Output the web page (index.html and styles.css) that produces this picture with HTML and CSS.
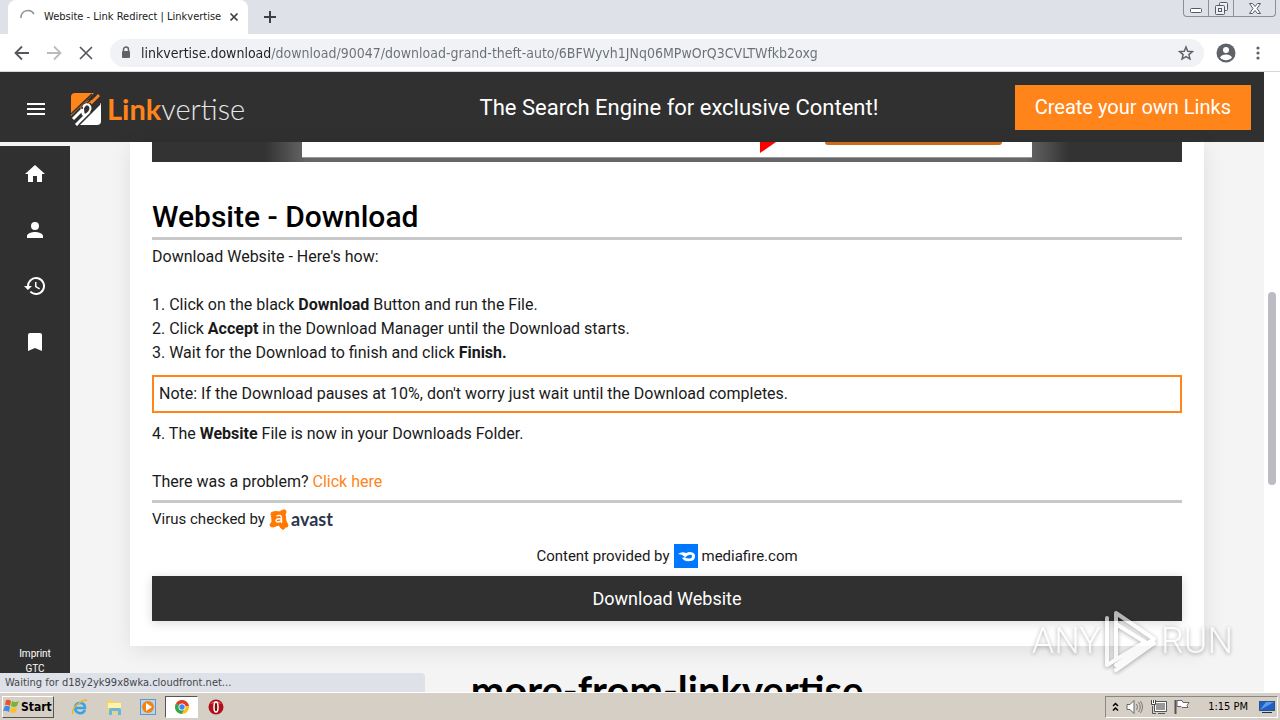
FILE: index.html
```html
<!DOCTYPE html>
<html lang="en">
<head>
    <meta charset="UTF-8">
    <meta name="viewport" content="width=device-width, initial-scale=1.0">
    <title>Website - Link Redirect | Linkvertise</title>
    <link rel="stylesheet" href="styles.css">
</head>
<body>
    <!-- Browser tabs -->
    <div class="tab-strip">
        <div class="tab">
            <svg class="spinner" width="16" height="16" viewBox="0 0 16 16"><path d="M1 9a7 7 0 0 1 13-4" fill="none" stroke="#8d9094" stroke-width="1.500"/></svg>
            <span class="tab-title">Website - Link Redirect | Linkvertise</span>
            <button class="icon-button" aria-label="Close tab">
                <svg width="10" height="10" viewBox="0 0 10 10"><path d="M1.500 1.500l7 7M8.500 1.500l-7 7" stroke="#3c4043" stroke-width="1.700"/></svg>
            </button>
        </div>
        <button class="icon-button new-tab" aria-label="New tab">
            <svg width="12" height="12" viewBox="0 0 12 12"><path d="M6 0v12M0 6h12" stroke="#3c4043" stroke-width="2"/></svg>
        </button>
        <div class="window-buttons">
            <button aria-label="Minimize"><svg width="12" height="5" viewBox="0 0 12 5"><rect x=".5" y=".5" width="11" height="4" rx="1" fill="#fff" stroke="#555a66"/></svg></button>
            <button aria-label="Restore"><svg width="13" height="13" viewBox="0 0 13 13" fill="#eef0f4" stroke="#555a66"><rect x="4.500" y=".5" width="8" height="8" rx="1"/><rect x=".5" y="3.500" width="9" height="9" rx="1"/><rect x="3.500" y="6.500" width="3" height="3"/></svg></button>
            <button class="window-close" aria-label="Close"><svg width="12" height="11" viewBox="0 0 12 11"><path d="M.5.5h3L6 3.500 8.500.5h3L8 5.500l3.500 5h-3L6 7.500l-2.500 3h-3L4 5.500z" fill="#fff" stroke="#555a66"/></svg></button>
        </div>
    </div>

    <!-- Address bar -->
    <div class="toolbar">
        <button class="icon-button" aria-label="Back"><svg width="16" height="16" viewBox="0 0 16 16"><path d="M15 8H2M8 1.500L1.500 8 8 14.500" fill="none" stroke="#55585c" stroke-width="1.800"/></svg></button>
        <button class="icon-button" aria-label="Forward"><svg width="16" height="16" viewBox="0 0 16 16"><path d="M1 8h13M8 1.500L14.500 8 8 14.500" fill="none" stroke="#b9bbbe" stroke-width="1.800"/></svg></button>
        <button class="icon-button" aria-label="Stop"><svg width="16" height="16" viewBox="0 0 16 16"><path d="M2 2l12 12M14 2L2 14" stroke="#55585c" stroke-width="1.700"/></svg></button>
        <div class="address">
            <svg width="10" height="13" viewBox="0 0 10 13"><path d="M2.500 5V3.500a2.500 2.500 0 0 1 5 0V5" fill="none" stroke="#5f6368" stroke-width="1.500"/><rect x="1" y="5" width="8" height="7" rx="1" fill="#5f6368"/></svg>
            <input type="text" aria-label="Address" value="linkvertise.download/download/90047/download-grand-theft-auto/6BFWyvh1JNq06MPwOrQ3CVLTWfkb2oxg">
            <button class="icon-button" aria-label="Bookmark this page"><svg width="16" height="16" viewBox="0 0 24 24"><path d="M12 3l2.600 6.300 6.900.6-5.200 4.500 1.600 6.700-5.900-3.600-5.900 3.600 1.600-6.700-5.200-4.500 6.900-.6z" fill="none" stroke="#5f6368" stroke-width="2.200"/></svg></button>
        </div>
        <div class="toolbar-end">
            <button class="icon-button" aria-label="Profile"><svg width="20" height="20" viewBox="0 0 20 20"><circle cx="10" cy="10" r="9.500" fill="#5f6368"/><circle cx="10" cy="7" r="3" fill="#fff"/><path d="M4 14.500c1.500-4 10.500-4 12 0-3 3.700-9 3.700-12 0z" fill="#fff"/></svg></button>
            <button class="icon-button" aria-label="Menu"><svg width="4" height="14" viewBox="0 0 4 14" fill="#5f6368"><circle cx="2" cy="2" r="1.600"/><circle cx="2" cy="7" r="1.600"/><circle cx="2" cy="12" r="1.600"/></svg></button>
        </div>
    </div>

    <!-- Web page -->
    <div class="viewport">
        <div class="site">
            <header class="site-header">
                <button class="icon-button menu-button" aria-label="Open menu"><svg width="18" height="12" viewBox="0 0 18 12"><path d="M0 1h18M0 6h18M0 11h18" stroke="#fff" stroke-width="2"/></svg></button>
                <a class="logo" href="#">
                    <svg width="32" height="34" viewBox="0 0 32 34">
                        <path d="M1 22V5q0-4 4-4h19L1 24z" fill="#ff8419"/>
                        <path d="M31 11v18q0 4-4 4H9z" fill="#fff"/>
                        <path d="M11 17l6-6q4-3 5-1l7-7" fill="none" stroke="#ff8419" stroke-width="3"/>
                        <path d="M3 27l10-10q-1 7 3 6L6 33" fill="none" stroke="#fff" stroke-width="3"/>
                        <path d="M1 22L22 2M12 17q0-5 5-6l9-8" fill="none" stroke="#303030" stroke-width="1.500"/>
                        <path d="M9 33l21-21" stroke="#303030" stroke-width="1.500"/>
                        <path d="M13 15q2-4 6-2 3 3 0 7l-6 6" fill="none" stroke="#fff" stroke-width="2"/>
                        <circle cx="16" cy="17" r="2" fill="#303030"/>
                    </svg>
                    <span class="logo-text"><b>Link</b>vertise</span>
                </a>
                <p class="slogan">The Search Engine for exclusive Content!</p>
                <button class="create-button">Create your own Links</button>
            </header>

            <div class="site-body">
                <nav class="sidebar">
                    <a href="#" aria-label="Home"><svg width="24" height="24" viewBox="0 0 24 24"><path d="M10 20v-6h4v6h5v-8h3L12 3 2 12h3v8z"/></svg></a>
                    <a href="#" aria-label="Account"><svg width="24" height="24" viewBox="0 0 24 24"><path d="M12 12a4 4 0 1 0 0-8 4 4 0 0 0 0 8zm0 2c-2.670 0-8 1.340-8 4v2h16v-2c0-2.660-5.330-4-8-4z"/></svg></a>
                    <a href="#" aria-label="History"><svg width="24" height="24" viewBox="0 0 24 24"><path d="M13 3a9 9 0 0 0-9 9H1l3.890 3.890.07.14L9 12H6a7 7 0 1 1 2.060 4.940l-1.420 1.420A9 9 0 1 0 13 3zm-1 5v5l4.280 2.540.72-1.210-3.500-2.080V8z"/></svg></a>
                    <a href="#" aria-label="Bookmarks"><svg width="24" height="24" viewBox="0 0 24 24"><path d="M17 3H7a2 2 0 0 0-2 2v16l7-3 7 3V5a2 2 0 0 0-2-2z"/></svg></a>
                    <div class="legal">
                        <a href="#">Imprint</a>
                        <a href="#">GTC</a>
                    </div>
                </nav>

                <main class="content">
                    <article class="card">
                        <div class="banner">
                            <div class="banner-inner">
                                <svg width="25" height="11" viewBox="0 0 25 11"><path d="M0 0h16L0 11z" fill="#f00"/></svg>
                                <span class="banner-button"></span>
                            </div>
                        </div>
                        <h1>Website - Download</h1>
                        <div class="steps">
                            <p>Download Website - Here's how:</p>
                            <br>
                            <p>1. Click on the black <b>Download</b> Button and run the File.</p>
                            <p>2. Click <b>Accept</b> in the Download Manager until the Download starts.</p>
                            <p>3. Wait for the Download to finish and click <b>Finish.</b></p>
                            <p class="note">Note: If the Download pauses at 10%, don't worry just wait until the Download completes.</p>
                            <p>4. The <b>Website</b> File is now in your Downloads Folder.</p>
                            <br>
                            <p>There was a problem? <a href="#">Click here</a></p>
                        </div>
                        <p class="checked">Virus checked by
                            <svg width="21" height="21" viewBox="0 0 21 21"><path d="M4 3q3-1 6 0l4-2q3-1 3 2 0 1-1 2l1 7 2 4q0 3-3 2l-1 2q-2 1-3-1l-2-3-6 2q-3 0-3-2 0-1 2-3 0-5-1-8 0-2 2-2z" fill="#ff7800" stroke="#ff7800" stroke-linejoin="round"/><path d="M7.500 7q5-2 5 2v5M12 10q-5-1-5 2 1 2 5 0" fill="none" stroke="#fff" stroke-width="1.400"/></svg>
                            <span class="avast">avast</span>
                        </p>
                        <p class="provider">Content provided by
                            <svg width="24" height="24" viewBox="0 0 24 24"><path d="M0 0h24v24H0z" fill="#0077ff"/><path d="M4 10q4-3 8-1l3-1q6 0 6 4 0 5-5 5-5 1-8-3l3-1q-3-3-7-3z" fill="#fff"/><path d="M11 14q2-3 4-3 3-1 3 1 0 3-3 2.500-2-.5-4-.5z" fill="#0077ff"/></svg>
                            mediafire.com
                        </p>
                        <button class="download-button">Download Website</button>
                    </article>
                    <h2>more-from-linkvertise</h2>
                </main>
            </div>
        </div>
        <div class="scrollbar"><div class="thumb"></div></div>
        <div class="status">Waiting for d18y2yk99x8wka.cloudfront.net...</div>
        <div class="watermark">
            <span>ANY</span>
            <svg width="58" height="66" viewBox="0 0 58 66"><path d="M5 57V10M14 50V5l38 26L14 57M5 57l38-23L14 16M14 62l38-27" fill="none" stroke="#fff" stroke-width="4" stroke-linecap="round" stroke-linejoin="round"/></svg>
            <span>RUN</span>
        </div>
    </div>

    <!-- Windows taskbar -->
    <footer class="taskbar">
        <button class="start">
            <svg width="17" height="16" viewBox="0 0 17 16"><path d="M3 1q3-1 5 1L7 7Q4 5 2 6z" fill="#e6552b"/><path d="M9 2q3 2 7 0l-2 5q-3 2-6 0z" fill="#76b82a"/><path d="M2 7q3-1 5 1l-1 5q-3-2-6-1z" fill="#3c8de0"/><path d="M8 8q3 2 6 0l-1 5q-3 2-6 0z" fill="#fbc02d"/></svg>
            Start
        </button>
        <button class="task" aria-label="Internet Explorer"><svg width="18" height="18" viewBox="0 0 18 18"><path d="M14 12q-2 4-6 3-4-1-4-6 1-4 5-4 5 0 5 5H5" fill="none" stroke="#38a3e2" stroke-width="2.500"/><path d="M2 16Q0 12 7 6q8-6 9-3" fill="none" stroke="#e7b731" stroke-width="1.500"/></svg></button>
        <button class="task" aria-label="Explorer"><svg width="18" height="18" viewBox="0 0 18 18"><path d="M2 2h5l1 2h8v11H2z" fill="#f0d56c"/><path d="M3 5h13v5H3z" fill="#fff3ab"/><path d="M4 17v-5q0-2 2-2h8q2 0 2 2v5h-3v-4H7v4z" fill="#65b9dd"/></svg></button>
        <button class="task" aria-label="Media Player"><svg width="18" height="18" viewBox="0 0 18 18"><rect x="1.500" y="1.500" width="15" height="15" fill="#b9d4ee" stroke="#5d97cc"/><circle cx="9" cy="9" r="6" fill="#f48412"/><path d="M7 5l6 4-6 4z" fill="#fff"/></svg></button>
        <button class="task active" aria-label="Chrome"><svg width="16" height="16" viewBox="0 0 16 16"><circle cx="8" cy="8" r="7" fill="#fbc116"/><path d="M8 8L2 4.500a7 7 0 0 1 12 0z" fill="#e33b2e"/><path d="M8 8L2 4.500A7 7 0 0 0 7.500 15L10 11z" fill="#2da94f"/><path d="M8 4.500h6a7 7 0 0 1 .9 2.500H8z" fill="#e33b2e"/><circle cx="8" cy="8" r="3.500" fill="#fff"/><circle cx="8" cy="8" r="2.700" fill="#4285f4"/></svg></button>
        <button class="task" aria-label="Opera"><svg width="16" height="16" viewBox="0 0 16 16"><circle cx="8" cy="8" r="7.500" fill="#b0101a"/><path d="M2 5q6-6 12 0-6-2-12 0z" fill="#e8646a"/><ellipse cx="8" cy="8" rx="2" ry="5" fill="#7c0a10" stroke="#fff" stroke-width="1.500"/></svg></button>
        <div class="tray">
            <svg width="7" height="10" viewBox="0 0 7 10"><path d="M1 4l2.500-2.500L6 4M1 8.500L3.500 6 6 8.500" fill="none" stroke="#000" stroke-width="1.500"/></svg>
            <svg width="17" height="16" viewBox="0 0 17 16"><path d="M1 5.500h3l4-4v13l-4-4H1z" fill="#fff" stroke="#666"/><path d="M10.500 5q2 3 0 6M12.500 3q3.500 5 0 10M14.500 2q4 6 0 12" fill="none" stroke="#777"/></svg>
            <svg width="17" height="16" viewBox="0 0 17 16"><rect x="5.500" y="3.500" width="10" height="8" fill="#999" stroke="#fff"/><path d="M4.500 2.500h12v10h-12zM8 14.500h7M2.500 7v7.500H6" fill="none" stroke="#555"/><path d="M1.500 1v4.500h4V1M3.500 1v3" fill="#fff" stroke="#444"/></svg>
            <svg width="17" height="16" viewBox="0 0 17 16"><path d="M1.500 1v14" stroke="#555" stroke-width="2"/><path d="M3 1.500h5l1 2h6l-2 3 1 2H8l-1-1H3z" fill="#fff" stroke="#666"/></svg>
            <time>1:15 PM</time>
            <svg width="16" height="14" viewBox="0 0 16 14"><rect x=".5" y="1.500" width="15" height="9" fill="#1d5fc4" stroke="#2e5384"/><path d="M1 10l6-8h8z" fill="#5d9bea"/><path d="M3 12.500h10" stroke="#17305a"/></svg>
        </div>
    </footer>
</body>
</html>
```
FILE: styles.css
```css
* {
    margin: 0;
    padding: 0;
    box-sizing: border-box;
}

body {
    font-family: Roboto, sans-serif;
    font-size: 16px;
    line-height: 24px;
    color: #1a1a1a;
    height: 100vh;
    overflow: hidden;
    display: flex;
    flex-direction: column;
}

button {
    font: inherit;
    color: inherit;
    background: none;
    border: none;
    cursor: pointer;
}

a {
    color: #ff8419;
    text-decoration: none;
}

svg {
    flex-shrink: 0;
}

.icon-button {
    display: flex;
    align-items: center;
    justify-content: center;
}

/* Browser tabs */
.tab-strip {
    height: 34px;
    flex-shrink: 0;
    display: flex;
    padding-left: 8px;
    background: #dee1e8;
}

.tab {
    width: 240px;
    display: flex;
    align-items: center;
    gap: 8px;
    padding: 0 11px 0 12px;
    background: #fff;
    border-radius: 8px 8px 0 0;
}

.tab-title {
    flex: 1;
    font-family: "DejaVu Sans Condensed", "DejaVu Sans", sans-serif;
    font-size: 11px;
    white-space: nowrap;
}

.new-tab {
    width: 44px;
}

.window-buttons {
    display: flex;
    height: 17px;
    margin-left: auto;
    margin-right: 4px;
    border: 1px solid #8b8f9b;
    border-top: none;
    border-radius: 0 0 4px 4px;
}

.window-buttons button {
    width: 25px;
    display: flex;
    align-items: center;
    justify-content: center;
    border-right: 1px solid #8b8f9b;
}

.window-buttons button:first-child {
    align-items: flex-end;
    padding-bottom: 3px;
}

.window-buttons .window-close {
    width: 41px;
    border-right: none;
}

/* Address bar */
.toolbar {
    height: 38px;
    flex-shrink: 0;
    display: flex;
    align-items: center;
    gap: 16px;
    padding: 0 20px 0 14px;
    background: #fff;
    border-bottom: 1px solid #d5d7db;
}

.address {
    flex: 1;
    height: 28px;
    display: flex;
    align-items: center;
    gap: 10px;
    padding: 0 10px 0 11px;
    background: #f0f2f5;
    border-radius: 14px;
}

/* Host name is darker than the path */
.address input {
    flex: 1;
    border: none;
    outline: none;
    font-family: "DejaVu Sans Condensed", "DejaVu Sans", sans-serif;
    font-size: 14px;
    color: transparent;
    background: linear-gradient(to right, #202124 129px, #6b6f74 129px);
    -webkit-background-clip: text;
    background-clip: text;
}

.toolbar-end {
    display: flex;
    align-items: center;
    gap: 20px;
    margin-left: -4px;
}

/* Web page */
.viewport {
    flex: 1;
    min-height: 0;
    display: flex;
    position: relative;
    overflow: hidden;
}

.site {
    flex: 1;
    display: flex;
    flex-direction: column;
    background: #f4f4f4;
}

.site-header {
    height: 70px;
    flex-shrink: 0;
    display: flex;
    align-items: center;
    padding: 0 13px 0 27px;
    background: #303030;
    color: #fff;
}

.menu-button {
    padding-top: 4px;
    margin-right: 25px;
}

.logo {
    display: flex;
    align-items: center;
    gap: 5px;
    padding-top: 3px;
}

.logo-text {
    font-family: Lato, sans-serif;
    font-size: 29px;
    font-weight: 300;
    color: #e6e6e6;
}

.logo-text b {
    font-weight: 700;
    color: #ff8419;
}

.slogan {
    flex: 1;
    padding: 2px 0 0 98px;
    font-size: 22px;
    text-align: center;
}

.create-button {
    height: 45px;
    padding: 0 20px;
    background: #ff8419;
    font-size: 20px;
}

.site-body {
    flex: 1;
    min-height: 0;
    display: flex;
}

.sidebar {
    width: 70px;
    margin-top: 4px;
    padding: 16px 0;
    display: flex;
    flex-direction: column;
    align-items: center;
    gap: 32px;
    background: #303030;
}

.sidebar > a {
    height: 24px;
    fill: #fff;
}

.legal {
    margin-top: auto;
    font-size: 10px;
    line-height: 15px;
    text-align: center;
}

.legal a {
    display: block;
    color: #fff;
}

.content {
    flex: 1;
    padding: 0 60px;
}

.card {
    padding: 0 22px 25px;
    background: #fff;
    box-shadow: 0 4px 20px rgba(0, 0, 0, 0.09);
}

.banner {
    height: 20px;
    padding: 0 150px;
    background: linear-gradient(to right, #333 11%, #666 15%, #666 85%, #333 89%);
}

.banner-inner {
    height: 16px;
    display: flex;
    justify-content: flex-end;
    gap: 40px;
    padding-right: 30px;
    background: #fff;
    border-bottom: 1px solid #999;
}

.banner-button {
    width: 177px;
    height: 3px;
    background: #cc6d1c;
    border-radius: 0 0 4px 4px;
}

h1 {
    margin-top: 37px;
    padding-bottom: 2px;
    font-size: 30px;
    line-height: 36px;
    font-weight: 500;
    color: #000;
    border-bottom: 3px solid #c8c8c8;
}

.steps {
    padding: 5px 0 6px;
    border-bottom: 3px solid #c8c8c8;
}

.note {
    margin: 10px 0 9px;
    padding: 5px;
    border: 2px solid #ff8419;
}

.checked,
.provider {
    display: flex;
    align-items: center;
    gap: 4px;
    font-size: 15px;
}

.checked {
    margin: 4px 0 13px;
}

.avast {
    font-family: Lato, sans-serif;
    font-size: 18px;
    font-weight: 700;
    color: #2d364c;
    margin-left: -3px;
}

.provider {
    justify-content: center;
    margin-bottom: 8px;
}

.download-button {
    display: block;
    width: 100%;
    height: 45px;
    background: #303030;
    color: #fff;
    font-size: 18px;
    box-shadow: 0 2px 10px rgba(0, 0, 0, 0.15);
}

h2 {
    margin-top: 20px;
    font-family: Lato, sans-serif;
    font-size: 40px;
    line-height: 48px;
    font-weight: 700;
    color: #000;
    text-align: center;
}

.scrollbar {
    width: 16px;
    padding: 220px 4px 0;
    background: #fff;
}

.thumb {
    height: 193px;
    background: #bdbbc3;
    border-radius: 4px;
}

/* Load status over the page */
.status {
    position: absolute;
    left: 0;
    bottom: 0;
    width: 425px;
    height: 19px;
    padding-left: 5px;
    font-family: "DejaVu Sans Condensed", "DejaVu Sans", sans-serif;
    font-size: 11px;
    line-height: 20px;
    color: #44474c;
    background: #dee1e8;
    border-radius: 0 4px 0 0;
}

.watermark {
    position: absolute;
    right: 47px;
    bottom: 18px;
    display: flex;
    align-items: center;
    gap: 1px;
    font-family: Roboto, sans-serif;
    font-size: 36px;
    font-weight: 300;
    color: #fff;
    opacity: 0.65;
    filter: drop-shadow(0 1px 2px rgba(0, 0, 0, 0.5));
    pointer-events: none;
}

/* Windows taskbar */
.taskbar {
    height: 28px;
    flex-shrink: 0;
    display: flex;
    align-items: center;
    gap: 1px;
    padding: 1px 2px 0;
    font-family: "DejaVu Sans Condensed", "DejaVu Sans", sans-serif;
    font-size: 12px;
    color: #000;
    background: #d6cfc6;
    border-top: 1px solid #fff;
}

.start {
    width: 52px;
    height: 22px;
    margin-right: 8px;
    display: flex;
    align-items: center;
    gap: 1px;
    font-size: 12px;
    font-weight: bold;
    border: 1px solid;
    border-color: #fff #555 #555 #fff;
}

.task {
    width: 33px;
    height: 22px;
    display: flex;
    align-items: center;
    justify-content: center;
}

.task.active {
    background: #fff;
    border: 1px solid;
    border-color: #555 #fff #fff #555;
}

.tray {
    height: 22px;
    margin-left: auto;
    display: flex;
    align-items: center;
    gap: 7px;
    padding: 0 2px 0 6px;
    border: 1px solid;
    border-color: #888 #fff #fff #888;
}

.tray time {
    margin: 0 4px 0 10px;
    font-size: 11px;
}
```
